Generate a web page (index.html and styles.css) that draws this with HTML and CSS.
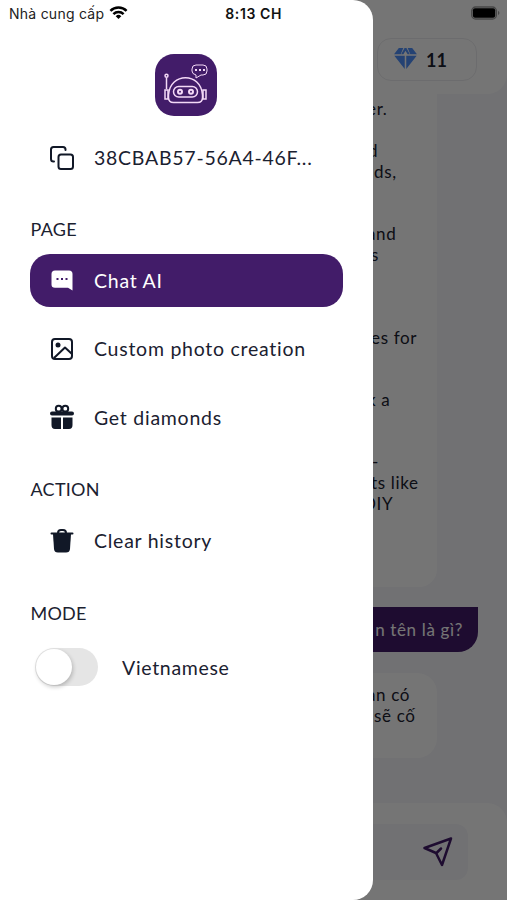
FILE: index.html
```html
<!DOCTYPE html>
<html lang="en">
<head>
<meta charset="utf-8">
<title>Chat AI</title>
<link rel="stylesheet" href="styles.css">
</head>
<body>
<div class="app">
  <main class="chat">
    <header class="chat-header">
      <svg class="battery" viewBox="0 0 30 14"><rect x=".8" y=".8" width="25.4" height="12.4" rx="4" fill="none" stroke="#999" stroke-width="1.4"/><rect x="2" y="2.200" width="23" height="9.600" rx="2" fill="#000"/><path d="M28 4.700q2.800 2.300 0 4.600z" fill="#999"/></svg>
      <div class="balance">
        <svg class="gem" viewBox="0 0 24 22"><path d="M5 0h4.700L7 6.500H0zM11 0h2l3.500 6.500h-2.300L12 2.800 9.800 6.500H7.500zM14.300 0H19l5 6.500h-7zM.3 8h10.900v14zM12.800 8h10.900L12.800 22z" fill="#5090fa"/></svg>
        <span>11</span>
      </div>
    </header>
    <section class="messages">
      <div class="bubble reply long">
        <p class="er">er.</p><p class="gap-2 single">d</p><p class="ds">ds,</p>
        <p class="gap-3 and">and</p><p>s</p>
        <p class="gap-4">es for</p>
        <p class="gap-3 ka">k a</p>
        <p class="gap-3 dash">-</p><p>ts like</p><p class="diy">DIY</p>
      </div>
      <div class="bubble mine">n tên là gì?</div>
      <div class="bubble reply short"><p class="and">ạn có</p><p class="se">sẽ cố</p></div>
    </section>
    <footer class="composer">
      <div class="field">
        <svg class="send" viewBox="0 0 30 30"><path d="M28 1.500L1.500 11 13 16l6 12zM13.500 16l4.500-4.500" fill="none" stroke="#421c69" stroke-width="2.500" stroke-linejoin="round" stroke-linecap="round"/></svg>
      </div>
    </footer>
  </main>
  <div class="scrim"></div>
  <aside class="drawer">
    <div class="status">
      <span>Nhà cung cấp</span>
      <svg class="wifi" viewBox="0 0 20 14"><g fill="none" stroke="#000" stroke-width="2.700"><path d="M1.300 5.200a12.300 12.300 0 0 1 17.400 0"/><path d="M4.500 8.700a7.800 7.800 0 0 1 11 0"/></g><path d="M7 11a4.300 4.300 0 0 1 6 0l-3 3z"/></svg>
      <b class="clock">8:13 CH</b>
    </div>
    <svg class="logo" viewBox="0 0 62 62">
      <rect width="62" height="62" rx="19" fill="#421c69"/>
      <g fill="none" stroke="#f4d9f7" stroke-width="1.500">
        <path d="M13.500 43.500V41C15 18 46 18 47.500 41v2.500q0 5-5 5h-24q-5 0-5-5z"/>
        <rect x="18.500" y="32.500" width="24" height="10.500" rx="5.200"/>
        <circle cx="25" cy="37.700" r="2" stroke-width="2"/><circle cx="36" cy="37.700" r="2" stroke-width="2"/>
        <rect x="10" y="36" width="3" height="9"/><rect x="48" y="36" width="3" height="9"/>
        <path d="M11.500 35V24"/><circle cx="11.500" cy="21.700" r="1.500"/>
        <path d="M41 11h7q4 0 4 4v2q0 4-4 4h-2l-5 3v-3q-4-1-4-4v-2q0-4 4-4z" stroke-width="1"/>
        <path d="M40 16h2m2 0h2m2 0h2" stroke-width="1.800"/>
      </g>
    </svg>
    <div class="row id">
      <svg class="icon" viewBox="0 0 24 24"><g fill="none" stroke="#111827" stroke-width="2" stroke-linecap="round"><rect x="8.500" y="8.500" width="14.500" height="14.500" rx="2.500"/><path d="M4 15.500H3.500Q1 15.500 1 13V3.500Q1 1 3.500 1H13q2.500 0 2.500 2.500V4"/></g></svg>
      <span class="device">38CBAB57-56A4-46F...</span>
    </div>
    <h2 class="page">PAGE</h2>
    <nav class="menu">
      <a class="row active">
        <svg class="icon" viewBox="0 0 24 24"><path d="M5 2.500h14q3.500 0 3.500 3.500v16.500l-4.500-2.700H5Q1.500 19.800 1.500 16.500V6q0-3.500 3.500-3.500z" fill="#fff"/><path d="M6.500 11h2m2.500 0h2m2.500 0h2" stroke="#421c69" stroke-width="2"/></svg>
        <span>Chat AI</span>
      </a>
      <a class="row">
        <svg class="icon" viewBox="0 0 24 24"><g fill="none" stroke="#111827" stroke-width="2"><rect x="2" y="2" width="20" height="20" rx="3"/><path d="M4 21l11-10.500 7 6.500" stroke-linejoin="round"/></g><circle cx="8" cy="8" r="2.500" fill="#111827"/></svg>
        <span>Custom photo creation</span>
      </a>
      <a class="row">
        <svg class="icon" viewBox="0 0 24 24"><path d="M2 6.500h20q2 0 2 2t-2 2H2q-2 0-2-2t2-2zM1.500 12.500H11V24H5q-3.500 0-3.500-4zM13 12.500h9.500V20q0 4-3.500 4h-6z" fill="#111827"/><g fill="none" stroke="#111827" stroke-width="2"><circle cx="8.700" cy="3.700" r="2.900"/><circle cx="15.300" cy="3.700" r="2.900"/></g></svg>
        <span>Get diamonds</span>
      </a>
    </nav>
    <h2 class="action">ACTION</h2>
    <a class="row">
      <svg class="icon" viewBox="0 0 24 24"><path d="M1.500 4.500h21M8 4q0-3 3-3h2q3 0 3 3" fill="none" stroke="#111827" stroke-width="2" stroke-linecap="round"/><path d="M3 5h18l-1 15q-.4 3.500-3.900 3.500H7.900Q4.400 23.500 4 20z" fill="#111827"/></svg>
      <span>Clear history</span>
    </a>
    <h2 class="mode">MODE</h2>
    <div class="language"><span class="switch"><i class="knob"></i></span><span>Vietnamese</span></div>
  </aside>
</div>
</body>
</html>
```
FILE: styles.css
```css
* { box-sizing: border-box; }
body { margin: 0; font-family: Lato, sans-serif; color: #1b2130; }
p, h2 { margin: 0; }
svg { display: block; flex: none; overflow: visible; }
.app { position: relative; width: 507px; height: 900px; overflow: hidden; }

.chat { height: 900px; display: flex; flex-direction: column; background: #f7f7fb; }
.chat-header { height: 94px; padding: 6px 7px 0 0; display: flex; flex-direction: column; align-items: flex-end; gap: 18px; background: #fff; border-radius: 0 0 20px 20px; }
.battery { width: 29px; height: 14px; }
.balance { width: 100px; height: 43px; margin-right: 23px; padding-left: 16px; display: flex; align-items: center; gap: 9px; border: 1px solid #ececef; border-radius: 14px; }
.gem { width: 23px; height: 21px; margin-top: -3px; }
.balance span { font-size: 18px; font-weight: 700; }
.messages { flex: 1; display: flex; flex-direction: column; padding-right: 29px; }
.bubble { font-size: 17px; line-height: 20.750px; letter-spacing: .65px; }
.reply { width: 437px; padding-left: 371px; background: #fff; }
.long { height: 493px; padding-top: 5.300px; border-bottom-right-radius: 18px; }
.gap-2 { margin-top: 20.750px; }
.gap-3 { margin-top: 41.500px; }
.gap-4 { margin-top: 62.250px; }
.er, .and { margin-left: -4px; }
.single { margin-left: -3px; }
.ds, .se { margin-left: 3px; }
.ka { margin-left: -4px; }
.dash { margin-left: 1px; }
.diy { margin-left: -8px; }
.mine { align-self: flex-end; width: 180px; height: 45px; margin-top: 20px; padding: 13px 15px 0 0; text-align: right; color: #fff; background: #421c69; border-radius: 20px 0 20px 20px; }
.short { height: 85px; margin-top: 21px; padding-top: 12px; border-radius: 0 20px 20px 20px; }
.composer { height: 97px; padding: 21px 39px 20px 20px; background: #fff; border-radius: 20px 20px 0 0; }
.field { height: 56px; padding-right: 15px; display: flex; align-items: center; justify-content: flex-end; background: #f7f7fb; border-radius: 12px; }
.send { width: 30px; height: 30px; }
.scrim { position: absolute; inset: 0; background: rgba(0, 0, 0, .54); }

.drawer { position: absolute; inset: 0 auto 0 0; width: 372.500px; padding: 0 30px; background: #fff; border-radius: 0 20px 20px 0; }
.status { height: 27px; margin-left: -21px; display: flex; align-items: center; font-family: Inter, sans-serif; font-size: 14px; letter-spacing: .25px; color: #222; }
.wifi { width: 19px; height: 13px; margin: -3px 0 0 5px; }
.clock { margin-left: 97px; font-size: 14px; font-weight: 600; letter-spacing: .6px; color: #111; }
.logo { width: 62px; height: 62px; margin: 27px auto 0; }
.row { height: 53.500px; display: flex; align-items: center; padding-left: 20px; gap: 20px; border-radius: 20px; font-size: 19.500px; letter-spacing: .74px; }
.icon { width: 24px; height: 24px; }
.id { margin-top: 15px; }
.menu { display: flex; flex-direction: column; gap: 15px; }
.active { background: #421c69; color: #fff; }
h2 { height: 24px; padding-left: .5px; line-height: 24px; font-size: 18px; font-weight: 400; letter-spacing: .25px; }
.page { margin: 32px 0 13px; }
.action { margin: 33px 0 13px; }
.mode { margin: 33px 0 23.500px; }
.language { display: flex; align-items: center; gap: 24px; padding-left: 5px; font-size: 19.500px; letter-spacing: .68px; }
.switch { width: 63px; height: 38px; border-radius: 19px; background: #e5e5e5; padding: 1px; }
.knob { display: block; width: 36px; height: 36px; border-radius: 50%; background: #fff; box-shadow: 1px 2px 4px rgba(0, 0, 0, .22); }
```
